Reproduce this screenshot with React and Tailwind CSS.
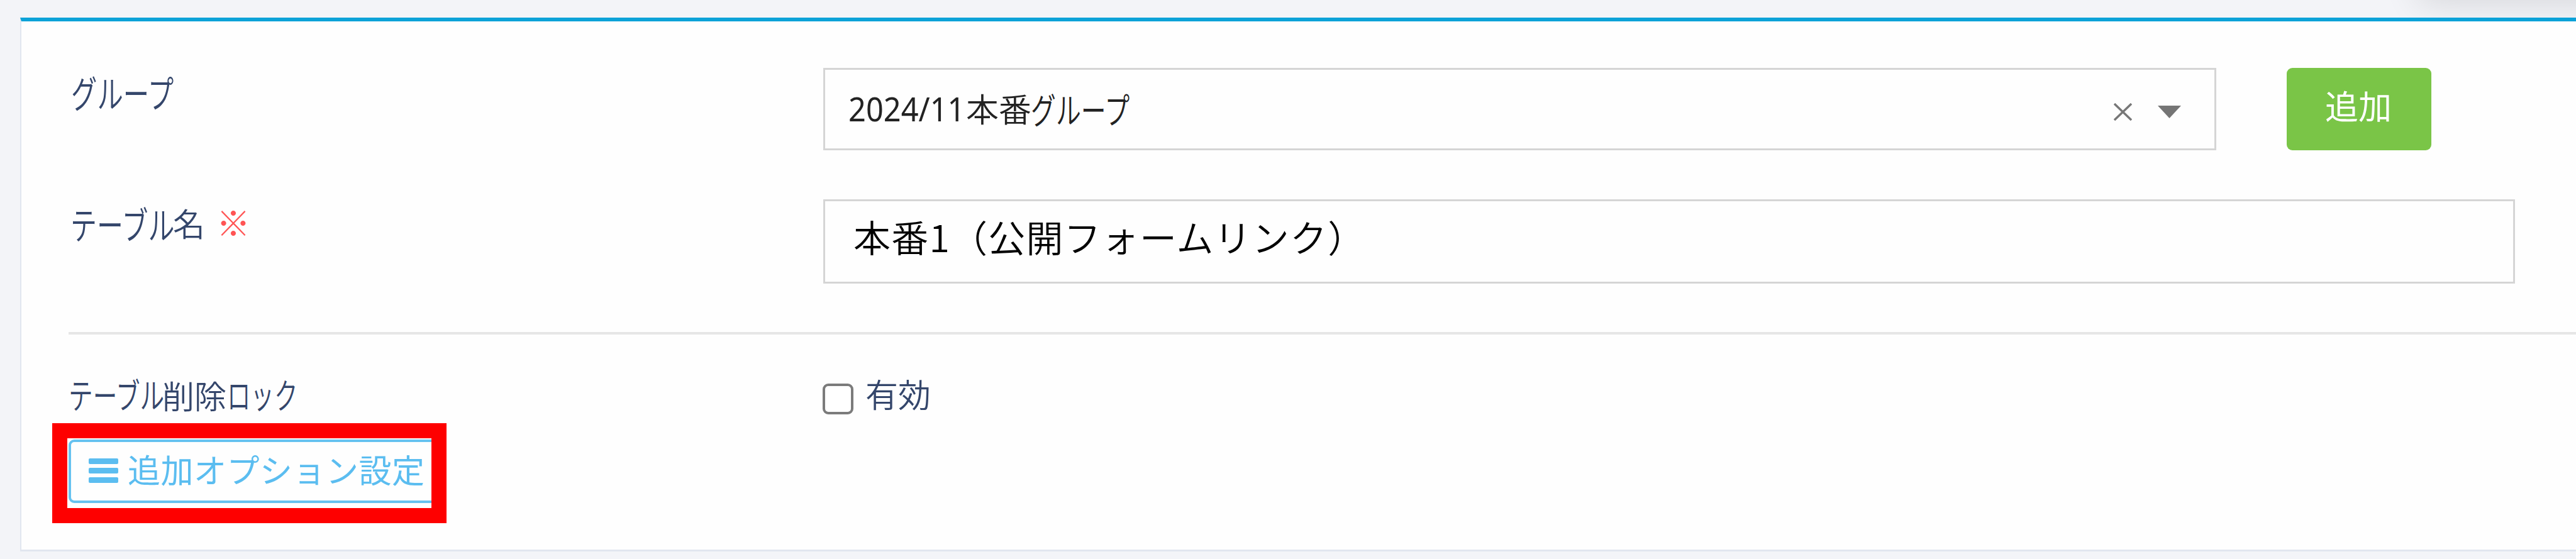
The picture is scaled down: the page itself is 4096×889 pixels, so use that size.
import React, { useState } from "react";

// narrow katakana, squeezed horizontally inside a fixed-width box
const Kana = ({ width, scale = "scale-x-[0.7]", children }) => (
  <span className={`inline-block whitespace-nowrap ${width}`}>
    <span className={`inline-block origin-left ${scale}`}>{children}</span>
  </span>
);

const Label = ({ children, className = "" }) => (
  <div
    className={`w-[1200px] shrink-0 whitespace-nowrap leading-[60px] text-[54px] text-[#34466b] ${className}`}
  >
    {children}
  </div>
);

const App = () => {
  const [locked, setLocked] = useState(false);
  const [tableName, setTableName] = useState("本番1（公開フォームリンク）");

  return (
    <div className="relative h-[889px] w-full overflow-hidden bg-[#f3f4f8] pl-[32px] pt-[28px] font-['Noto_Sans_CJK_JP',sans-serif] font-[350]">
      {/* shadow of the header menu */}
      <div className="absolute -top-[100px] left-[3845px] h-[100px] w-[400px] shadow-[0_5px_55px_0_rgba(0,0,0,0.12)]" />

      <div className="relative h-[849px] border-b-[3px] border-l-[2px] border-t-[6px] border-b-[#e1e6ef] border-l-[#e1e6ef] border-t-[#0ca2d8] bg-[#fefefe] pl-[75px] pt-[74px]">
        <div className="flex h-[131px]">
          <Label className="pl-[4px] pt-[8px]">
            <span className="text-[60px]">
              <Kana width="w-[170px]" scale="scale-x-[0.69]">グループ</Kana>
            </span>
          </Label>
          <div className="flex w-[2215px] items-center justify-between border-[3px] border-[#d5d5d5] pl-[37px] pr-[53px]">
            <div className="flex items-center whitespace-nowrap pb-[4px] text-[53px] leading-[60px] text-[#222]">
              <span className="inline-block w-[187px]">
                <span className="inline-block origin-left scale-x-[0.92] font-['Noto_Sans',sans-serif] font-normal">
                  2024/11
                </span>
              </span>
              <span className="w-[103px] text-[52px]">本番</span>
              <span className="text-[57px]">
                <Kana width="w-[160px]">グループ</Kana>
              </span>
            </div>
            <div className="flex items-center gap-[41px] pt-[8px]">
              <svg width="29" height="28" viewBox="0 0 29 28" stroke="#777" strokeWidth="3.4">
                <path d="M1 1L28 27M28 1L1 27" />
              </svg>
              <svg width="37" height="20" viewBox="0 0 37 20" fill="#757575">
                <path d="M0 0H37L18.5 20Z" />
              </svg>
            </div>
          </div>
          <button
            type="button"
            className="ml-[112px] w-[230px] rounded-[9px] bg-[#7ac547] pb-[11px] pr-[2px] text-[53px] font-normal text-white"
          >
            追加
          </button>
        </div>

        <div className="mt-[78px] flex h-[134px]">
          <Label className="flex items-center self-start pl-[3px] pt-[6px]">
            <span className="text-[60px]">
              <Kana width="w-[163px]">テーブル</Kana>
            </span>
            <span className="w-[69px] pb-[2px] text-[51px]">名</span>
            <span className="pb-[3px] text-[54px] text-[#ff5454]">※</span>
          </Label>
          <input
            type="text"
            value={tableName}
            onChange={(e) => setTableName(e.target.value)}
            className="w-[2690px] border-[3px] border-[#d5d5d5] pb-[16px] pl-[45px] text-[59px] tracking-[1.2px] text-black"
          />
        </div>

        <div className="mt-[77px] h-[4px] bg-[#e6e6e6]" />

        <div className="mt-[64px] flex h-[103px]">
          <Label>
            <span className="text-[56px]">
              <Kana width="w-[149px]" scale="scale-x-[0.69]">テーブル</Kana>
            </span>
            <span className="inline-block w-[103px] text-[51px]">削除</span>
            <span className="text-[56px]">
              <Kana width="w-[120px]" scale="scale-x-[0.67]">ロック</Kana>
            </span>
          </Label>
          <label className="flex h-[60px] items-center text-[52px] text-[#34466b]">
            <input
              type="checkbox"
              checked={locked}
              onChange={(e) => setLocked(e.target.checked)}
              className="-ml-px mr-[19px] mt-[16px] h-[49px] w-[49px] appearance-none rounded-[9px] border-[4px] border-[#7b7b7b] bg-white"
            />
            有効
          </label>
        </div>

        <div className="relative w-[588px]">
          <button
            type="button"
            className="flex h-[101px] w-full items-center whitespace-nowrap rounded-[9px] border-[4px] border-[#66c2f0] pb-[2px] pl-[28px] text-[52px] text-[#5bbdf0]"
          >
            <svg width="47" height="39" viewBox="0 0 47 39" fill="#5bbdf0" className="mr-[15px]">
              <rect width="47" height="9" rx="2" />
              <rect y="15" width="47" height="9" rx="2" />
              <rect y="30" width="47" height="9" rx="2" />
            </svg>
            <span className="pb-[5px] font-normal tracking-[0.5px]">追加オプション設定</span>
          </button>
          <div className="absolute -left-[26px] -top-[26px] h-[159px] w-[627px] border-[24.5px] border-[#fe0000]" />
        </div>
      </div>
    </div>
  );
};

export default App;
